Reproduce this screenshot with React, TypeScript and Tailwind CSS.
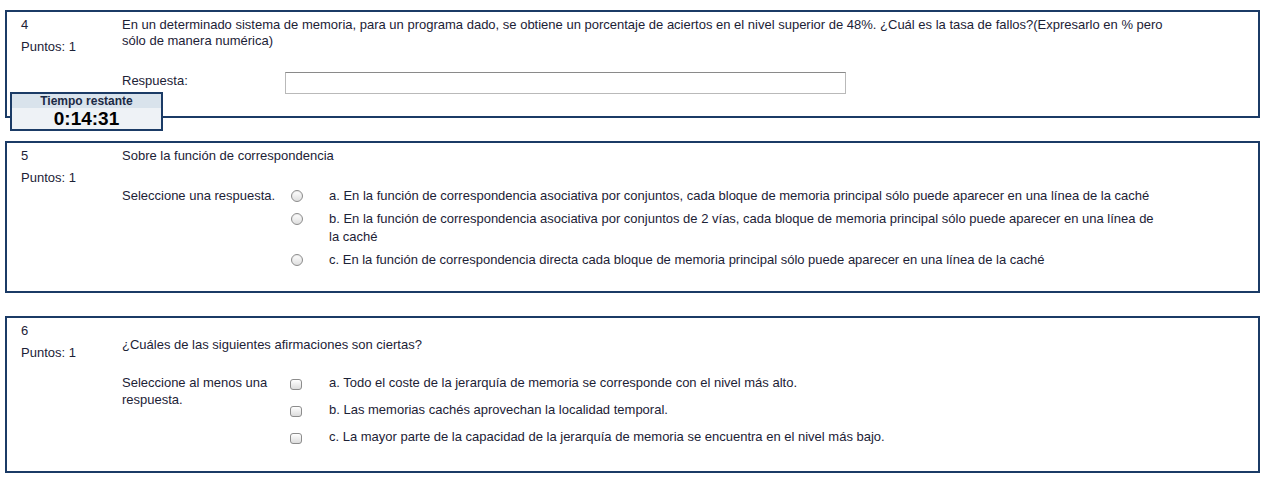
import { ReactNode } from 'react';

const FONT = "font-['Liberation_Sans',Arial,sans-serif]";

function Radio() {
  return (
    <span className="mt-[3px] block h-[12px] w-[12px] shrink-0 rounded-full border border-[#8c8c8c] bg-gradient-to-b from-white to-[#dedede] shadow-[inset_0_1px_1px_rgba(0,0,0,0.08)]" />
  );
}

function Check() {
  return (
    <span className="mt-[5px] block h-[11px] w-[12px] shrink-0 rounded-[3px] border border-[#8c8c8c] bg-gradient-to-b from-white to-[#dcdcdc]" />
  );
}

interface BoxProps {
  num: number;
  children: ReactNode;
  className?: string;
}

function QuestionBox({ num, children, className = '' }: BoxProps) {
  return (
    <div className={`mx-[5px] flex border-2 border-[#1b3b66] bg-white pt-[5px] ${className}`}>
      <div className="w-[115px] shrink-0 pl-[14px]">
        <div className="leading-[16px]">{num}</div>
        <div className="mt-[6px] leading-[16px]">Puntos: 1</div>
      </div>
      <div className="w-[1046px]">{children}</div>
    </div>
  );
}

export default function App() {
  const radioOpts = [
    'a. En la función de correspondencia asociativa por conjuntos, cada bloque de memoria principal sólo puede aparecer en una línea de la caché',
    'b. En la función de correspondencia asociativa por conjuntos de 2 vías, cada bloque de memoria principal sólo puede aparecer en una línea de la caché',
    'c. En la función de correspondencia directa cada bloque de memoria principal sólo puede aparecer en una línea de la caché',
  ];
  const checkOpts = [
    'a. Todo el coste de la jerarquía de memoria se corresponde con el nivel más alto.',
    'b. Las memorias cachés aprovechan la localidad temporal.',
    'c. La mayor parte de la capacidad de la jerarquía de memoria se encuentra en el nivel más bajo.',
  ];

  return (
    <div className={`relative min-h-[485px] w-[1265px] bg-white pt-[10px] text-[13px] text-[#1c2236] ${FONT}`}>
      {/* Question 4 */}
      <QuestionBox num={4} className="pb-[22px]">
        <p className="leading-[16px]">
          En un determinado sistema de memoria, para un programa dado, se obtiene un porcentaje de aciertos en el nivel superior de 48%. ¿Cuál es la tasa de fallos?(Expresarlo en % pero sólo de manera numérica)
        </p>
        <div className="mt-[23px] flex">
          <label className="w-[163px] shrink-0 pt-[1px] leading-[16px]">Respuesta:</label>
          <div className="h-[22px] w-[561px] border border-[#b9b9b9] border-t-[#8a8a8a] bg-white" />
        </div>
      </QuestionBox>

      {/* Question 5 */}
      <QuestionBox num={5} className="mt-[23px] pb-[22px]">
        <p className="leading-[16px]">Sobre la función de correspondencia</p>
        <div className="mt-[23px] flex">
          <div className="w-[169px] shrink-0 leading-[18px]">Seleccione una respuesta.</div>
          <div className="flex flex-col gap-[5px]">
            {radioOpts.map(o => (
              <div key={o} className="flex">
                <Radio />
                <span className="ml-[26px] w-[837px] leading-[18px]">{o}</span>
              </div>
            ))}
          </div>
        </div>
      </QuestionBox>

      {/* Question 6 */}
      <QuestionBox num={6} className="mt-[23px] pb-[25px]">
        <p className="mt-[14px] leading-[16px]">¿Cuáles de las siguientes afirmaciones son ciertas?</p>
        <div className="mt-[21px] flex">
          <div className="w-[168px] shrink-0 leading-[17px]">Seleccione al menos una respuesta.</div>
          <div className="flex flex-col gap-[9px]">
            {checkOpts.map(o => (
              <div key={o} className="flex">
                <Check />
                <span className="ml-[27px] w-[837px] leading-[18px]">{o}</span>
              </div>
            ))}
          </div>
        </div>
      </QuestionBox>

      {/* Timer overlay */}
      <div className="absolute left-[10px] top-[92px] w-[153px] border-2 border-[#1b3b66] bg-[#eef2f6] text-center">
        <div className="bg-[#d9e3ec] text-[12px] font-bold leading-[14px] text-[#1b2a44]">Tiempo restante</div>
        <div className="text-[19px] font-bold leading-[21px] text-black">0:14:31</div>
      </div>
    </div>
  );
}
